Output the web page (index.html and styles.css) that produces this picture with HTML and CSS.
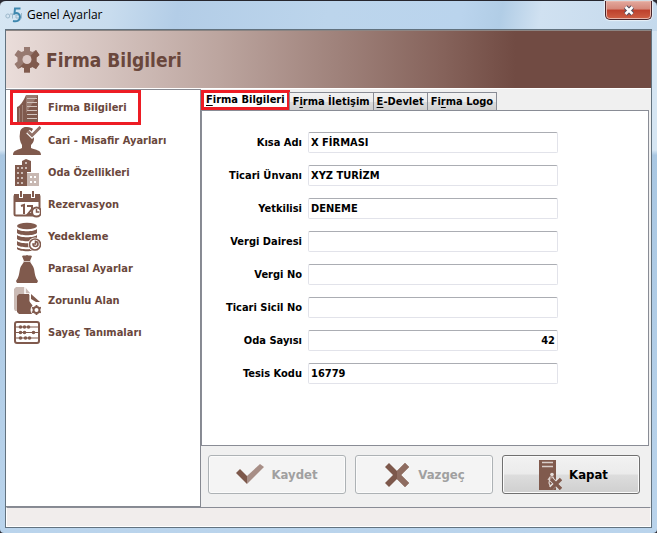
FILE: index.html
```html
<!DOCTYPE html>
<html lang="tr">
<head>
<meta charset="utf-8">
<title>Genel Ayarlar</title>
<link rel="stylesheet" href="styles.css">
</head>
<body>
<div class="window">
  <header class="titlebar">
    <svg class="app-icon" viewBox="0 0 18 16" aria-hidden="true">
      <g fill="none" stroke="#9db8cb"><circle cx="2.800" cy="9" r="2"/><path d="M5 7h5M7.500 7v4.500M14 8h-3v3h3M16.500 6v5.500"/></g>
      <path d="M15.500 1.500H10L9.500 6.500c3-1 5.500 0 5.500 3.500s-3 5-7 4" fill="none" stroke="#3e87ae" stroke-width="2"/>
    </svg>
    <h1 class="window-title">Genel Ayarlar</h1>
    <button class="close" type="button" aria-label="Kapat">
      <svg viewBox="0 0 12 11" aria-hidden="true"><path d="M2.500 2L9.500 9M9.500 2L2.500 9" stroke="#534f60" stroke-width="4.600"/><path d="M2.500 2L9.500 9M9.500 2L2.500 9" stroke="#fff" stroke-width="2.600"/></svg>
    </button>
  </header>

  <div class="client">
    <div class="banner">
      <svg class="banner-icon" viewBox="0 0 26 26" aria-hidden="true">
        <path d="M10 0h6v4l2.500 1 3.500-2 3.500 5-3 2.500v4l3 2.500-3.500 5-3.500-2-2.500 1v4.500h-6V21l-2.500-1L4 22l-3.500-5 3-2.500v-4L.5 8 4 3l3.500 2L10 4z" fill="#977970"/>
        <path d="M22 3l3.500 5-3 2.500v4l3 2.500-3.500 5-3.500-2-2.500 1v4.500h-6V21l-2.500-1L4 22z" fill="#805a4d"/>
        <circle cx="13" cy="12.500" r="4.500" fill="#dcc9c6"/>
      </svg>
      <h2 class="banner-title">Firma Bilgileri</h2>
    </div>

    <div class="body">
      <nav class="sidebar">
        <a class="nav-item nav-item-active" href="#firma">
          <svg class="nav-icon" viewBox="0 0 28 30" aria-hidden="true">
            <path d="M4 14c3-1 6-5 9-12v27H4z" fill="#805a4d"/><path d="M6.500 15v14M9.500 12v17" stroke="#aa9188" stroke-width=".7"/>
            <path d="M13 2h12v27H13z" fill="#805a4d"/><path d="M14 5.500h10M14 9.500h10M14 13.500h10M14 17.500h10M14 21.500h10M14 25.500h10" stroke="#d3c4be"/><path d="M13 2h12L13 20z" fill="#cbb9b2" opacity=".35"/>
          </svg><span>Firma Bilgileri</span></a>
        <a class="nav-item" href="#cari">
          <svg class="nav-icon" viewBox="0 0 28 30" aria-hidden="true">
            <path d="M7 7c0-4 3-6.500 7-6 3 0 5 1 6 2l-3 5c3 1 4 3 4 5 0 3-2 5-3 6v3c5 2 10 2 10 7H0c0-5 5-5 9-7v-3C7 16 6 11 7 7z" fill="#805a4d"/>
            <path d="M15 5.500l4 4 9-9" fill="none" stroke="#fff" stroke-width="5"/><path d="M15 5.500l4 4 8.500-8.500" fill="none" stroke="#927166" stroke-width="3"/>
          </svg><span>Cari - Misafir Ayarları</span></a>
        <a class="nav-item" href="#oda">
          <svg class="nav-icon" viewBox="0 0 28 30" aria-hidden="true">
            <path d="M2 7h7V3l4-2 5 2v11h-4v14H2z" fill="#805a4d"/><path d="M14 15h12v13H14z" fill="#c8b8b2"/>
            <path d="M4 9h2v2H4zm4 0h2v2H8zm4 0h2v2h-2zM4 14h2v2H4zm4 0h2v2H8zM4 19h2v2H4zm4 0h2v2H8zM4 24h2v2H4zm4 0h2v2H8zM12 4h2v2h-2z" fill="#cbbab4"/>
            <path d="M17 18h2v2h-2zm4 0h2v2h-2zM17 23h2v2h-2zm4 0h2v2h-2z" fill="#fff"/>
          </svg><span>Oda Özellikleri</span></a>
        <a class="nav-item" href="#rezervasyon">
          <svg class="nav-icon" viewBox="0 0 28 30" aria-hidden="true">
            <rect x="1.500" y="5" width="25" height="20.500" rx="1.500" fill="#fff" stroke="#805a4d" stroke-width="2"/><path d="M1 4h26v8H1z" fill="#805a4d"/>
            <path d="M8 2v6M20 2v6" stroke="#fff" stroke-width="4"/><path d="M8 1v6M20 1v6" stroke="#805a4d" stroke-width="2"/>
            <path d="M8 16l3-1v9M14 16h5v3l-4 5h4" fill="none" stroke="#805a4d" stroke-width="2"/>
            <circle cx="23.500" cy="22" r="4.500" fill="#fff" stroke="#805a4d" stroke-width="2"/><path d="M23.500 19v3h3" fill="none" stroke="#805a4d" stroke-width="1.500"/>
          </svg><span>Rezervasyon</span></a>
        <a class="nav-item" href="#yedekleme">
          <svg class="nav-icon" viewBox="0 0 28 30" aria-hidden="true">
            <g fill="#805a4d"><ellipse cx="14" cy="4" rx="10" ry="3.200"/><path d="M4 7c3 3 17 3 20 0v4c-3 3-17 3-20 0zM4 13c3 3 17 3 20 0v4c-3 3-17 3-20 0zM4 19c3 3 17 3 20 0v4c-3 3-17 3-20 0zM4 25c3 3 17 3 20 0v2c-3 3-17 3-20 0z"/></g>
            <circle cx="22" cy="22.500" r="7" fill="#fff"/><circle cx="22" cy="22.500" r="5.500" fill="none" stroke="#805a4d" stroke-width="1.600"/><path d="M22.500 18.500V22H20a2.500 2.500 0 1 0 2.500-2.500" fill="none" stroke="#805a4d" stroke-width="1.600"/>
          </svg><span>Yedekleme</span></a>
        <a class="nav-item" href="#parasal">
          <svg class="nav-icon" viewBox="0 0 28 30" aria-hidden="true">
            <path d="M9 2c2-1 3 0 5-1 2 1 3 0 5 1l-2 5c0 2 3 4 4 8 1 5 1 8 4 12l-1 2H4l-1-2c3-4 3-7 4-12 1-4 4-6 4-8z" fill="#805a4d"/><path d="M10.500 7.500h7" stroke="#d2c3bd"/>
          </svg><span>Parasal Ayarlar</span></a>
        <a class="nav-item" href="#zorunlu">
          <svg class="nav-icon" viewBox="0 0 28 30" aria-hidden="true">
            <path d="M1 3l2-2h9l5 6v18H2l-1-2z" fill="#cbbbb5"/><path d="M12 1v7h5" fill="none" stroke="#fff" stroke-width="1.500"/>
            <path d="M4 10l2-2h10v7l4 5v8H6l-2-2z" fill="#805a4d"/><path d="M18 8v5l5 3h4z" fill="#805a4d"/>
            <circle cx="23.500" cy="24" r="6" fill="#fff"/><circle cx="23.500" cy="24" r="3" fill="none" stroke="#805a4d" stroke-width="2"/><path d="M23.500 19v2M23.500 27v2M19 21.500l2 1M26 25.500l2 1M19 26.500l2-1M26 22.500l2-1" stroke="#805a4d" stroke-width="1.800"/>
          </svg><span>Zorunlu Alan</span></a>
        <a class="nav-item" href="#sayac">
          <svg class="nav-icon" viewBox="0 0 28 30" aria-hidden="true">
            <rect x="2" y="4" width="24" height="21" rx="2" fill="#fff" stroke="#805a4d" stroke-width="2"/><path d="M3 9h22M3 14.500h22M3 20h22" stroke="#805a4d" stroke-width="1.200"/>
            <g fill="#805a4d"><circle cx="7.500" cy="9" r="1.800"/><circle cx="11.500" cy="9" r="1.800"/><circle cx="15.500" cy="9" r="1.800"/><circle cx="7.500" cy="14.500" r="1.800"/><circle cx="11.500" cy="14.500" r="1.800"/><circle cx="20.500" cy="14.500" r="1.800"/><circle cx="7.500" cy="20" r="1.800"/><circle cx="12.500" cy="20" r="1.800"/><circle cx="16.500" cy="20" r="1.800"/></g>
          </svg><span>Sayaç Tanımaları</span></a>
      </nav>

      <main class="content">
        <div class="tabs" role="tablist">
          <button class="tab tab-active" type="button" role="tab" aria-selected="true"><u>F</u>irma Bilgileri</button>
          <button class="tab" type="button" role="tab" aria-selected="false">F<u>i</u>rma İletişim</button>
          <button class="tab" type="button" role="tab" aria-selected="false"><u>E</u>-Devlet</button>
          <button class="tab" type="button" role="tab" aria-selected="false">Fi<u>r</u>ma Logo</button>
        </div>
        <form class="panel" id="company">
          <label for="kisa">Kısa Adı</label><input id="kisa" type="text" value="X FİRMASI">
          <label for="unvan">Ticari Ünvanı</label><input id="unvan" type="text" value="XYZ TURİZM">
          <label for="yetkili">Yetkilisi</label><input id="yetkili" type="text" value="DENEME">
          <label for="daire">Vergi Dairesi</label><input id="daire" type="text">
          <label for="vergino">Vergi No</label><input id="vergino" type="text">
          <label for="sicil">Ticari Sicil No</label><input id="sicil" type="text">
          <label for="sayi">Oda Sayısı</label><input id="sayi" class="number" type="text" value="42">
          <label for="tesis">Tesis Kodu</label><input id="tesis" type="text" value="16779">
        </form>
        <div class="actions">
          <button class="action" type="submit" form="company" disabled>
            <svg class="action-icon" viewBox="0 0 28 30" aria-hidden="true"><path d="M0 13l4-4 7 7v8z" fill="#7d584b"/><path d="M11 16L24 4l4 3-17 17z" fill="#a78e86"/></svg>
            <span>Kaydet</span></button>
          <button class="action" type="button" disabled>
            <svg class="action-icon" viewBox="0 0 28 30" aria-hidden="true"><path d="M6 3l8 8 8-8 4 4-8 8 8 8-4 4-8-8-8 8-4-4 8-8-8-8z" fill="#7d584b"/><path d="M14 11l8-8 4 4-8 8 8 8-4 4-8-8z" fill="#8e6c60"/></svg>
            <span>Vazgeç</span></button>
          <button class="action" type="button">
            <svg class="action-icon" viewBox="0 0 28 30" aria-hidden="true"><path d="M5 0h17v30H5z" fill="#805a4d"/><path d="M8 2.500h11M8 6.500h11" stroke="#d9ceca" stroke-width="1.500"/><circle cx="18" cy="14.500" r="1.800" fill="#e6dedb"/><path d="M14 20l2-3h3l1 3M16 18l-1 5 2 5" fill="none" stroke="#ddd2ce" stroke-width="1.200"/><path d="M17 19l9 9M26 19l-9 9" stroke="#e7e4e3" stroke-width="5"/><path d="M17 19l10 10M27 19L17 29" stroke="#805a4d" stroke-width="3.400"/></svg>
            <span>Kapat</span></button>
        </div>
      </main>
    </div>
    <footer class="status"></footer>
  </div>
</div>
</body>
</html>
```
FILE: styles.css
```css
* { box-sizing: border-box; }

body {
  margin: 0;
  font: bold 11px/16px "DejaVu Sans Condensed", "DejaVu Sans", sans-serif;
  color: #000;
  background: #2b2b33;
}

button, input { font: inherit; color: inherit; }

.window {
  display: flex;
  flex-direction: column;
  min-height: 100vh;
  padding: 0 5px 5px;
  border-top: 1px solid #26262e;
  border-radius: 6px 6px 4px 4px;
  background:
    linear-gradient(100deg, #d6e6f3 0%, #c8dcee 17%, #b3cde7 27%, #bcd5ec 50%, #bad4ed 70%, #b1cde6 76%, #d0e1f1 82%, #c4d9ec 100%) top / 100% 30px no-repeat,
    linear-gradient(#d6e6f3, #d6e6f3 28%, #a9c7e2 29%, #bad4ec);
}

.titlebar {
  display: flex;
  align-items: center;
  height: 28px;
}

.app-icon { width: 18px; height: 16px; margin-right: 4px; }

.window-title {
  flex: 1;
  margin: 0;
  font: 12px/16px "Open Sans", sans-serif;
}

.close {
  align-self: flex-start;
  display: grid;
  place-items: center;
  width: 47px;
  height: 19px;
  padding: 0;
  border: 1px solid #49242a;
  border-top: 0;
  border-radius: 0 0 5px 5px;
  background: linear-gradient(#e3a99e, #d5877a 45%, #bd402c 50%, #cf6045);
  box-shadow: inset 0 0 0 1px #e8b5aa, 0 0 1px 1px #e8f0f7;
}

.close svg { width: 12px; height: 11px; }

.client {
  flex: 1;
  display: flex;
  flex-direction: column;
  border: 1px solid #62727f;
  background: #f0f0f0;
}

.banner {
  display: flex;
  align-items: center;
  gap: 6px;
  height: 59px;
  padding-left: 8px;
  border-top: 1px solid #8c8583;
  border-bottom: 1px solid #fff;
  background: linear-gradient(90deg, #eaddda, #bca59f 33%, #85625a 68%, #714b43 79%);
}

.banner-icon { width: 26px; height: 26px; }

.banner-title {
  margin: 0;
  font-size: 19px;
  line-height: 24px;
  color: #6a473c;
}

.body {
  flex: 1;
  display: grid;
  grid-template-columns: 195px 1fr;
}

.sidebar {
  display: flex;
  flex-direction: column;
  padding: 0 4px;
  border: 1px solid #868991;
  border-left: 0;
  background: #fff;
}

.nav-item {
  display: flex;
  align-items: center;
  gap: 7px;
  height: 32px;
  padding-left: 3px;
  color: #6a473c;
  text-decoration: none;
}

.nav-item-active {
  width: 131px;
  height: 35px;
  padding-left: 0;
  border: 3px solid #ed1c24;
}

.nav-icon { flex: none; width: 28px; height: 30px; }

.content { display: flex; flex-direction: column; }

.tabs {
  display: flex;
  align-items: flex-end;
  height: 21px;
}

.tab {
  height: 18px;
  margin-left: -1px;
  padding: 0 3px;
  border: 1px solid #898c95;
  border-bottom: 0;
  line-height: 16px;
  white-space: nowrap;
  background: linear-gradient(#f2f2f2, #ebebeb 50%, #dddddd 51%, #cfcfcf);
}

.tab u { text-underline-offset: 2px; }

.tab-active {
  height: 20px;
  margin-left: 0;
  padding: 0 2px;
  border: 3px solid #ed1c24;
  line-height: 14px;
  background: #fff;
}

.panel {
  flex: 1;
  display: grid;
  grid-template-columns: 100px minmax(0, 250px);
  grid-auto-rows: 21px;
  gap: 12px 6px;
  align-content: start;
  margin-right: 2px;
  padding: 21px 8px 21px 0;
  border: 1px solid #898c95;
  background: #fff;
}

.panel label { line-height: 21px; text-align: right; white-space: nowrap; }

.panel input {
  width: 100%;
  height: 21px;
  padding: 0 2px;
  border: 1px solid #e2e3ea;
  border-top-color: #abadb3;
  border-radius: 2px;
  background: #fff;
}

.panel .number { text-align: right; }

.actions {
  display: grid;
  grid-template-columns: repeat(3, minmax(0, 138px));
  gap: 9px;
  padding: 9px 10px 13px 7px;
}

.action {
  display: flex;
  align-items: center;
  justify-content: center;
  gap: 7px;
  height: 39px;
  border: 1px solid #707070;
  border-radius: 3px;
  font-size: 13px;
  background: linear-gradient(#f2f2f2, #ebebeb 49%, #dddddd 51%, #cfcfcf);
  box-shadow: inset 0 0 0 1px #fbfbfb;
}

.action:disabled {
  border-color: #adb2b5;
  color: #a0a0a0;
  background: #f4f4f4;
}

.action-icon { width: 28px; height: 30px; }

.status {
  height: 20px;
  border: 1px solid #fff;
  border-top: 1px solid #898c95;
  background: #f1edec;
}
```
